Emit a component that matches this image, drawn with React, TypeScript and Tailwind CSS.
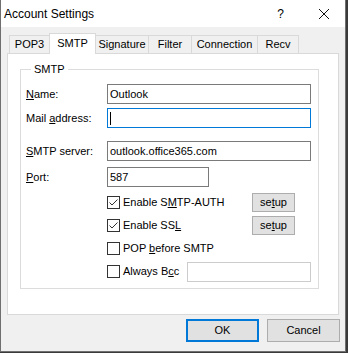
import React from "react";

const font = { fontFamily: '"Liberation Sans", Arial, sans-serif' };

function U({ children }: { children: React.ReactNode }) {
  return <span className="underline underline-offset-[1px] decoration-[1px]">{children}</span>;
}

function Check({ checked }: { checked?: boolean }) {
  return (
    <div className="w-[13px] h-[13px] border border-[#333333] bg-white flex items-center justify-center shrink-0">
      {checked && (
        <svg width="11" height="11" viewBox="0 0 11 11">
          <polyline points="1.5,5.5 4,8 9.5,2.5" fill="none" stroke="#333333" strokeWidth="1" />
        </svg>
      )}
    </div>
  );
}

function SetupBtn() {
  return (
    <div className="w-[43px] h-[19px] bg-[#e1e1e1] border border-[#adadad] flex items-center justify-center text-[11px] text-black">
      se<U>t</U>up
    </div>
  );
}

function Tab({ label, w, selected, first }: { label: string; w: string; selected?: boolean; first?: boolean }) {
  return (
    <div
      className={
        (selected
          ? "h-[21px] bg-white relative z-10 "
          : "h-[18px] mb-[1px] bg-[#f0f0f0] ") +
        (first ? "" : "-ml-px ") +
        w +
        " border-t border-x border-[#d9d9d9] flex items-center justify-center text-[11px] text-black"
      }
    >
      <span className={selected ? "mb-[2px]" : ""}>{label}</span>
    </div>
  );
}

export default function App() {
  return (
    <div className="w-[348px] h-[353px] bg-[#3a3a3a]" style={font}>
      <div className="w-[346px] h-[352px] border-x border-b border-[#6f6f6f] bg-[#f0f0f0] flex flex-col">
        {/* Title bar */}
        <div className="h-[27px] bg-white flex items-center pl-[3px] shrink-0">
          <span className="text-[12px] text-black">Account Settings</span>
          <span className="ml-auto text-[12px] text-black mr-[34px]">?</span>
          <svg width="12" height="12" viewBox="0 0 12 12" className="mr-[15px]">
            <path d="M1 1 L11 11 M11 1 L1 11" stroke="#111" strokeWidth="1" />
          </svg>
        </div>

        {/* Tabs */}
        <div className="mt-[6px] h-[21px] flex items-end pl-[8px] shrink-0">
          <Tab label="POP3" w="w-[41px]" first />
          <Tab label="SMTP" w="w-[47px]" selected />
          <Tab label="Signature" w="w-[54px]" />
          <Tab label="Filter" w="w-[44px]" />
          <Tab label="Connection" w="w-[67px]" />
          <Tab label="Recv" w="w-[42px]" />
        </div>

        {/* Panel */}
        <div className="-mt-px ml-[6px] w-[332px] h-[262px] bg-white border border-[#d9d9d9] shrink-0">
          <fieldset className="ml-[12px] mt-[9px] w-[299px] h-[226px] border border-[#dcdcdc] pl-[5px] text-[11px] text-black">
            <legend className="ml-[5px] px-[3px] leading-[13px]">SMTP</legend>
            <div className="mt-[8px] flex flex-col">
              <div className="flex items-center h-[20px]">
                <span className="w-[81px]"><U>N</U>ame:</span>
                <div className="w-[204px] h-[20px] border border-[#7a7a7a] flex items-center pl-[2px]">Outlook</div>
              </div>
              <div className="flex items-center h-[20px] mt-[4px]">
                <span className="w-[81px]">Mail <U>a</U>ddress:</span>
                <div className="w-[204px] h-[20px] border border-[#0078d7] flex items-center pl-[2px]">
                  <div className="w-px h-[13px] bg-black" />
                </div>
              </div>
              <div className="flex items-center h-[20px] mt-[13px]">
                <span className="w-[81px]"><U>S</U>MTP server:</span>
                <div className="w-[204px] h-[20px] border border-[#7a7a7a] flex items-center pl-[2px]">outlook.office365.com</div>
              </div>
              <div className="flex items-center h-[20px] mt-[6px]">
                <span className="w-[81px]"><U>P</U>ort:</span>
                <div className="w-[102px] h-[20px] border border-[#7a7a7a] flex items-center pl-[2px]">587</div>
              </div>
              <div className="mt-[4px] ml-[81px] flex flex-col">
                <div className="h-[23px] flex items-center">
                  <div className="w-[145px] flex items-center">
                    <Check checked />
                    <span className="ml-[3px]">Enable S<U>M</U>TP-AUTH</span>
                  </div>
                  <SetupBtn />
                </div>
                <div className="h-[23px] flex items-center">
                  <div className="w-[145px] flex items-center">
                    <Check checked />
                    <span className="ml-[3px]">Enable SS<U>L</U></span>
                  </div>
                  <SetupBtn />
                </div>
                <div className="h-[23px] flex items-center">
                  <Check />
                  <span className="ml-[3px]">POP <U>b</U>efore SMTP</span>
                </div>
                <div className="h-[23px] flex items-center">
                  <div className="w-[80px] flex items-center">
                    <Check />
                    <span className="ml-[3px]">Always B<U>c</U>c</span>
                  </div>
                  <div className="w-[124px] h-[20px] border border-[#cccccc] bg-white" />
                </div>
              </div>
            </div>
          </fieldset>
        </div>

        {/* Buttons */}
        <div className="mt-[4px] flex justify-end pr-[5px] gap-[8px] text-[11px] text-black">
          <div className="w-[73px] h-[23px] bg-[#e1e1e1] border-2 border-[#0078d7] flex items-center justify-center">OK</div>
          <div className="w-[73px] h-[23px] bg-[#e1e1e1] border border-[#adadad] flex items-center justify-center">Cancel</div>
        </div>
      </div>
    </div>
  );
}
